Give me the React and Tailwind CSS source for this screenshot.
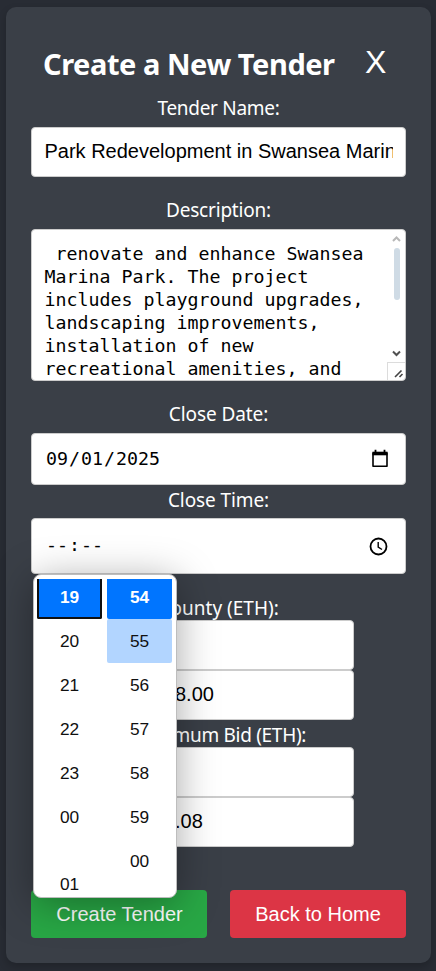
import React from 'react';

const hours = ['20', '21', '22', '23', '00'];
const minutes = ['56', '57', '58', '59', '00'];

function Label({ children, className }) {
  return (
    <div className={`flex shrink-0 items-center justify-center whitespace-nowrap font-['Noto_Sans',sans-serif] text-[19px] text-white ${className}`}>
      {children}
    </div>
  );
}

const box = 'shrink-0 rounded-[4px] border border-[#cccccc] bg-white';

function Resize() {
  return (
    <div className="absolute bottom-0 right-0 h-[18px] w-[18px] border-l border-t border-[#dcdcdc]">
      <svg className="absolute bottom-[1px] right-[1px]" width="10" height="10" viewBox="0 0 10 10" stroke="#444" strokeWidth="1.6" fill="none">
        <path d="M1 8 L7.5 1.5 M5.5 8 L8.5 5" />
      </svg>
    </div>
  );
}

function TimePicker() {
  const cell = 'flex h-11 w-[65px] shrink-0 items-center justify-center pt-[2px]';
  return (
    <div className="absolute left-[1px] top-[55px] flex h-[324px] w-[143.5px] gap-[5px] overflow-hidden rounded-[8px] border border-[#bdbdbd] bg-white pl-[3px] pt-[4px] font-['Liberation_Sans',sans-serif] text-[17.3px] text-[#101010] shadow-[0_6px_40px_rgba(0,0,0,0.35)]">
      <div className="flex h-[318px] flex-col">
        <div className="flex h-10 w-[65px] shrink-0 items-center justify-center rounded-b-[2px] border-x-2 border-b-2 border-[#101010] bg-[#0075ff] font-bold text-white">19</div>
        {hours.map((h) => <div key={h} className={cell}>{h}</div>)}
        <div className="mt-6 flex h-11 w-[65px] shrink-0 items-center justify-center">01</div>
      </div>
      <div className="flex h-[318px] flex-col">
        <div className="flex h-10 w-[65px] shrink-0 items-center justify-center rounded-b-[2px] bg-[#0075ff] pb-[2px] font-bold text-white">54</div>
        <div className="flex h-11 w-[65px] shrink-0 items-center justify-center rounded-[2px] bg-[#b2d5ff] pt-[2px]">55</div>
        {minutes.map((m) => <div key={m} className={cell}>{m}</div>)}
      </div>
    </div>
  );
}

export default function App() {
  return (
    <div className="h-[971px] w-[436px] overflow-hidden bg-[#282c34] pl-[6px] pt-[7px]">
      <div className="flex h-[956px] w-[425px] flex-col rounded-[10px] bg-[#3a3f47] px-[25px] shadow-[0_4px_8px_rgba(0,0,0,0.2)]">
        <div className="flex h-[88px] items-center pl-[12px] pt-[25px]">
          <h1 className="w-[322px] whitespace-nowrap font-['Noto_Sans',sans-serif] text-[29px] font-bold leading-none tracking-[-0.45px] text-white">Create a New Tender</h1>
          <div className="pb-[3px] font-['Liberation_Sans',sans-serif] text-[32px] leading-none text-white">X</div>
        </div>
        <Label className="h-[32px] pb-[6px] tracking-[-0.3px]">Tender Name:</Label>
        <div className={`flex h-[50px] items-center px-[12px] pb-[3px] ${box}`}>
          <div className="overflow-hidden whitespace-nowrap pl-[0.5px] font-['Liberation_Sans',sans-serif] text-[20px] text-black">Park Redevelopment in Swansea Marina</div>
        </div>
        <Label className="mt-[20px] h-[26px] tracking-[-0.2px]">Description:</Label>
        <div className={`relative mt-[6px] h-[152px] overflow-hidden ${box}`}>
          <div className="whitespace-pre pl-[12.5px] pt-[12px] font-['DejaVu_Sans_Mono',monospace] text-[18.27px] leading-[23px] text-black">
            {' renovate and enhance Swansea\nMarina Park. The project\nincludes playground upgrades,\nlandscaping improvements,\ninstallation of new\nrecreational amenities, and'}
          </div>
          <div className="absolute right-[4px] top-[6px] flex h-[121px] w-[9px] flex-col items-center">
            <svg width="9" height="7" viewBox="0 0 9 7" fill="none" stroke="#b8b8b8" strokeWidth="2"><path d="M1 5 L4.5 1.5 L8 5" /></svg>
            <div className="mt-[5px] h-[52px] w-[6px] rounded-[3px] bg-[#cfdbe5]" />
            <svg className="mt-auto" width="9" height="7" viewBox="0 0 9 7" fill="none" stroke="#505050" strokeWidth="2"><path d="M1 1.5 L4.5 5 L8 1.5" /></svg>
          </div>
          <Resize />
        </div>
        <Label className="mt-[20px] h-[26px] tracking-[-0.1px]">Close Date:</Label>
        <div className={`mt-[6px] flex h-[52px] items-center justify-between pl-[14px] pr-[16px] ${box}`}>
          <div className="flex font-['DejaVu_Sans_Mono',monospace] text-[18.27px] text-black">
            <span>09</span><span className="mx-px">/</span><span>01</span><span className="mx-px">/</span><span>2025</span>
          </div>
          <svg className="mb-[2px]" width="18" height="19" viewBox="0 0 18 19" fill="none" stroke="#000">
            <path d="M2 4 H16 V17.2 H2 Z" strokeWidth="1.6" strokeLinejoin="round" />
            <path d="M1.5 4.5 H16.5" strokeWidth="3.6" />
            <path d="M4.5 .8 V4 M13.5 .8 V4" strokeWidth="1.8" />
          </svg>
        </div>
        <Label className="h-[33px] pb-[3px] tracking-[-0.1px]">Close Time:</Label>
        <div className={`relative z-10 flex h-[56px] items-center justify-between pl-[14px] pr-[17px] ${box}`}>
          <div className="flex pb-[2px] font-['DejaVu_Sans_Mono',monospace] text-[18.27px] text-black">
            <span>--</span><span className="mx-px">:</span><span>--</span>
          </div>
          <svg width="19" height="19" viewBox="0 0 19 19" fill="none" stroke="#000" strokeWidth="1.8">
            <circle cx="9.5" cy="9.5" r="8" />
            <path d="M9.2 5 V10 L13 12.5" strokeWidth="1.4" />
          </svg>
          <TimePicker />
        </div>
        <Label className="mt-[20px] h-[26px] pt-[2px]">Bounty (ETH):</Label>
        <div className="flex flex-col items-center font-['Liberation_Sans',sans-serif] text-[20px] text-black">
          <div className={`h-[50px] w-[271px] ${box}`} />
          <div className={`flex h-[50px] w-[271px] items-center pb-[2px] pl-[91px] ${box}`}>8.00</div>
          <Label className="h-[27px] pt-[4px] tracking-[-0.3px]">Maximum Bid (ETH):</Label>
          <div className={`h-[50px] w-[271px] ${box}`} />
          <div className={`flex h-[50px] w-[271px] items-center pb-[2px] pl-[91px] ${box}`}>.08</div>
        </div>
        <div className="mt-[43px] flex justify-between font-['Liberation_Sans',sans-serif] text-[20px] text-white">
          <button className="h-[48px] w-[176px] whitespace-nowrap rounded-[4px] bg-[#28a745] pl-px">Create Tender</button>
          <button className="h-[48px] w-[176px] whitespace-nowrap rounded-[4px] bg-[#dc3545]">Back to Home</button>
        </div>
      </div>
    </div>
  );
}
